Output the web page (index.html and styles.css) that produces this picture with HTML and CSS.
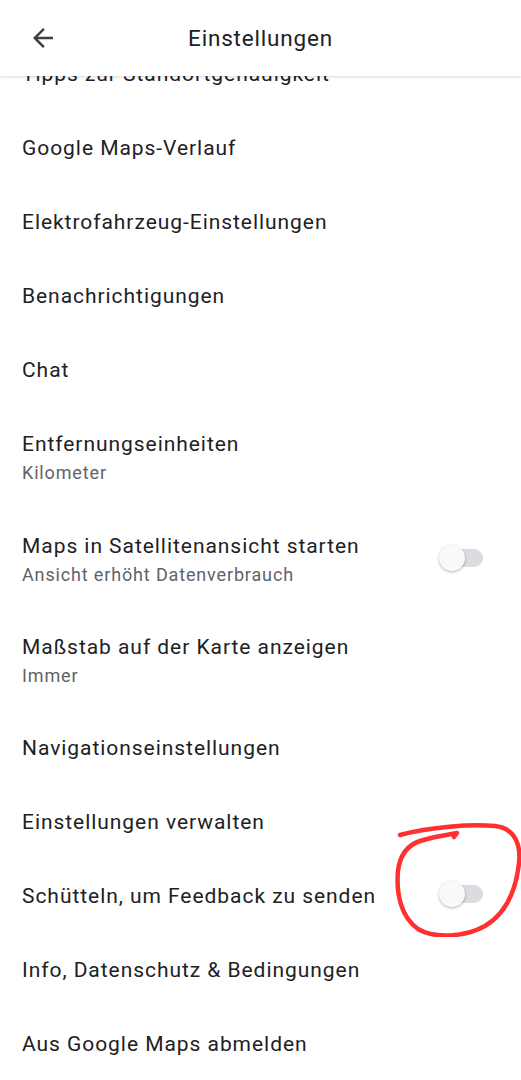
FILE: index.html
```html
<!DOCTYPE html>
<html lang="de">
<head>
<meta charset="utf-8">
<title>Einstellungen</title>
<link rel="stylesheet" href="styles.css">
</head>
<body>
<header class="appbar">
  <button class="back" aria-label="Zurück">
    <svg viewBox="0 0 24 24" width="30" height="30"><path d="M20 11H7.83l5.59-5.59L12 4l-8 8 8 8 1.41-1.41L7.83 13H20v-2z" fill="#3c4043"/></svg>
  </button>
  <h1 class="title">Einstellungen</h1>
</header>
<main class="list">
  <div class="item"><span class="label">Tipps zur Standortgenauigkeit</span></div>
  <div class="item"><span class="label">Google Maps-Verlauf</span></div>
  <div class="item"><span class="label">Elektrofahrzeug-Einstellungen</span></div>
  <div class="item"><span class="label">Benachrichtigungen</span></div>
  <div class="item"><span class="label">Chat</span></div>
  <div class="item two first">
    <div class="texts"><span class="label">Entfernungseinheiten</span><span class="sub">Kilometer</span></div>
  </div>
  <div class="item two">
    <div class="texts"><span class="label">Maps in Satellitenansicht starten</span><span class="sub">Ansicht erhöht Datenverbrauch</span></div>
    <span class="toggle"><span class="track"></span><span class="thumb"></span></span>
  </div>
  <div class="item two">
    <div class="texts"><span class="label">Maßstab auf der Karte anzeigen</span><span class="sub">Immer</span></div>
  </div>
  <div class="item"><span class="label">Navigationseinstellungen</span></div>
  <div class="item"><span class="label">Einstellungen verwalten</span></div>
  <div class="item marked">
    <span class="label">Schütteln, um Feedback zu senden</span>
    <span class="toggle"><span class="track"></span><span class="thumb"></span></span>
    <svg class="scribble" viewBox="0 0 130 125" width="130" height="125">
      <path d="M5,23 C35,15 75,12 100,14 C120,16 126,33 124,51 C121,79 110,102 90,114 C70,125 40,127 23,117 C6,105 1,82 3,59 C5,42 13,33 25,29 C37,25 50,23 62,21 L59,25" fill="none" stroke="#ff3030" stroke-width="4.5" stroke-linecap="round" stroke-linejoin="round"/>
    </svg>
  </div>
  <div class="item"><span class="label">Info, Datenschutz &amp; Bedingungen</span></div>
  <div class="item"><span class="label">Aus Google Maps abmelden</span></div>
</main>
</body>
</html>
```
FILE: styles.css
```css
* { box-sizing: border-box; }
html, body {
  margin: 0;
  padding: 0;
  background: #ffffff;
  height: 1080px;
  overflow: hidden;
}
body {
  font-family: Roboto, "Noto Sans", "Liberation Sans", sans-serif;
  color: #202124;
  position: relative;
}
.appbar {
  position: absolute;
  top: 0;
  left: 0;
  right: 0;
  height: 76px;
  background: #ffffff;
  box-shadow: 0 1px 3px rgba(0, 0, 0, 0.16);
  display: flex;
  align-items: center;
  justify-content: center;
  z-index: 2;
}
.back {
  position: absolute;
  left: 28px;
  top: 23px;
  width: 30px;
  height: 30px;
  padding: 0;
  border: 0;
  background: none;
  display: flex;
}
.title {
  margin: 0;
  font-size: 22.5px;
  font-weight: 400;
  letter-spacing: 0.8px;
  color: #202124;
}
.list {
  padding-top: 37px;
}
.item {
  height: 74px;
  display: flex;
  align-items: center;
  justify-content: space-between;
  padding: 0 38px 0 22px;
  position: relative;
}
.item.two { height: 101px; }
.item.two.first { height: 102px; }
.texts {
  display: flex;
  flex-direction: column;
}
.label {
  font-size: 21px;
  line-height: 30px;
  letter-spacing: 0.95px;
  color: #202124;
}
.sub {
  font-size: 18px;
  line-height: 28px;
  letter-spacing: 0.85px;
  color: #5f6368;
}
.toggle {
  position: relative;
  width: 44px;
  height: 26px;
  flex: none;
  margin-bottom: 4px;
}
.track {
  position: absolute;
  left: 5px;
  right: 0;
  top: 4px;
  height: 18px;
  border-radius: 9px;
  background: #dadce0;
}
.thumb {
  position: absolute;
  left: 0;
  top: 0;
  width: 26px;
  height: 26px;
  border-radius: 50%;
  background: #f8f9fa;
  box-shadow: 0 1px 3px rgba(0, 0, 0, 0.3);
}
.scribble {
  position: absolute;
  left: 395px;
  top: -47px;
  pointer-events: none;
}
```
